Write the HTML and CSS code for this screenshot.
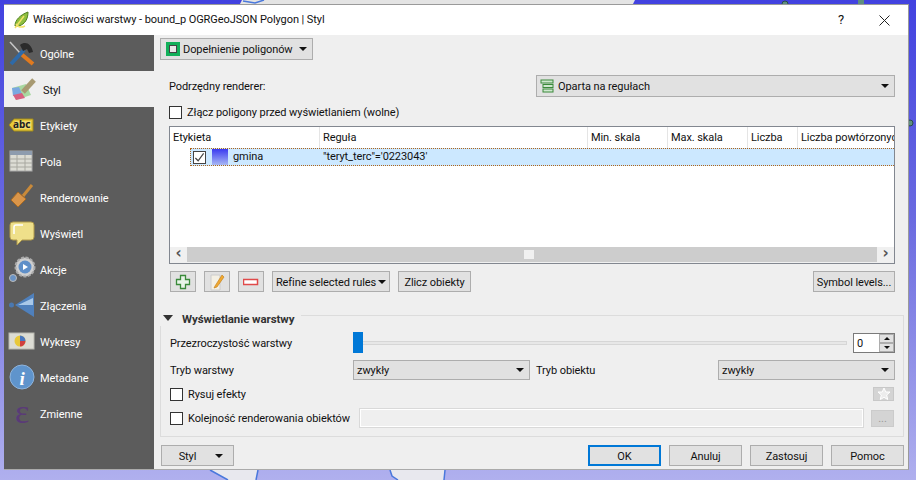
FILE: index.html
```html
<!DOCTYPE html>
<html lang="pl">
<head>
<meta charset="utf-8">
<title>Właściwości warstwy</title>
<link rel="stylesheet" href="styles.css">
</head>
<body>
<svg class="map" width="916" height="480" viewBox="0 0 916 480">
  <path d="M242 0h393l-2 4H240z" fill="#e4e4e4"/>
  <path d="M243 1l12 2 9-3" fill="none" stroke="#4a78dc" stroke-width="1.500"/>
  <circle cx="785" cy="4" r="3" fill="#5f8f7f" stroke="#2a4a4a"/>
  <rect x="858" y="0" width="6" height="5" fill="#5f8f7f"/>
  <circle cx="910" cy="123" r="3" fill="#5f8f7f" stroke="#2a4a4a"/>
  <path d="M210 470l18 10h28l2-10zM390 470l2 6 6 4h46l1-10z" fill="#e8e8ee"/>
  <path d="M210 470l18 10M258 470l-2 10M390 470l2 6 6 4M445 470l-1 10" fill="none" stroke="#4a78dc" stroke-width="1.500"/>
</svg>
<div class="window">
  <header class="titlebar">
    <svg class="app-icon" width="16" height="18" viewBox="0 0 16 18"><path d="M2 15C2 9 7 4 15 1c0 7-3 12-9 14z" fill="#8fbf3f" stroke="#4f7f1f"/><path d="M3 13c2 3 5 4 9 2M2 17 11 5" stroke="#f3e26a" stroke-width="1.500" fill="none"/></svg>
    <span class="title-text">Właściwości warstwy - bound_p OGRGeoJSON Polygon | Styl</span>
    <span class="title-help">?</span>
    <svg class="title-close" width="11" height="11" viewBox="0 0 11 11"><path d="M.5.5l10 10M10.500.5l-10 10" stroke="#222" fill="none"/></svg>
  </header>
  <div class="body">
    <nav class="sidebar">
      <div class="nav-item"><svg class="nav-icon" viewBox="0 0 26 26"><path d="M1 2l10 11" stroke="#c8c8c8" stroke-width="1.500"/><path d="M11 13l13 11" stroke="#e07a1f" stroke-width="4"/><path d="M2 24 15 10" stroke="#2f6aa8" stroke-width="4"/><path d="M11 5c5-4 11-2 13 7l-4 1-2-4-4 2z" fill="#2b2b2b"/></svg><span>Ogólne</span></div>
      <div class="nav-item active"><svg class="nav-icon" viewBox="0 0 26 26"><path d="M3 12l14-4 5 11-15 5z" fill="#a8d8a0"/><path d="M3 12l7-1 3 7-9 2z" fill="#7aa8e0"/><path d="M4 19l9-2 3 5-9 2z" fill="#d86080"/><path d="M14 16 25 4" stroke="#a89a72" stroke-width="5"/></svg><span class="nav-label-wide">Styl</span></div>
      <div class="nav-item"><svg class="nav-icon" viewBox="0 0 26 26"><path d="M0 13l5-6h19v12H5z" fill="#e8c93a" stroke="#a08a1a"/><rect x="6" y="9" width="16" height="8" fill="#f0dc70"/></svg><span class="nav-abc">abc</span><span>Etykiety</span></div>
      <div class="nav-item"><svg class="nav-icon" viewBox="0 0 26 26"><rect x="1" y="3" width="22" height="20" fill="#dcdcd4" stroke="#aaa"/><rect x="1" y="3" width="22" height="4" fill="#8e9cae"/><path d="M1 11h22M1 15h22M1 19h22M8 7v16M16 7v16" stroke="#a8a8a0"/></svg><span>Pola</span></div>
      <div class="nav-item"><svg class="nav-icon" viewBox="0 0 26 26"><path d="M14 12 23 1" stroke="#c98a3a" stroke-width="3"/><path d="M9 8l8 7-8 8-7-7z" fill="#d9954a" stroke="#a86a22"/></svg><span>Renderowanie</span></div>
      <div class="nav-item"><svg class="nav-icon" viewBox="0 0 26 26"><path d="M4 2h18a3 3 0 0 1 3 3v12a3 3 0 0 1-3 3H13l-5 5v-5H4a3 3 0 0 1-3-3V5a3 3 0 0 1 3-3z" fill="#efe08a" stroke="#b09a4a"/><path d="M5 14V7a2 2 0 0 1 2-2h7" stroke="#fff" stroke-width="1.500" fill="none"/></svg><span>Wyświetl</span></div>
      <div class="nav-item"><svg class="nav-icon" viewBox="0 0 26 26"><circle cx="16" cy="11" r="9.500" fill="#cfcfcf" stroke="#aaa" stroke-width="2" stroke-dasharray="3 1.500"/><circle cx="16" cy="11" r="6.500" fill="#5f8fc8"/><path d="M14 8l5 3-5 3z" fill="#fff"/><circle cx="4" cy="22" r="3.500" fill="#6a93c4" stroke="#bbb"/></svg><span>Akcje</span></div>
      <div class="nav-item"><svg class="nav-icon" viewBox="0 0 26 26"><path d="M6 13 25 1v24z" fill="#4f80bc"/><path d="M9 13l15-7v7z" fill="#a9c8e8"/><circle cx="2.500" cy="13" r="2.500" fill="#4a78b0"/></svg><span>Złączenia</span></div>
      <div class="nav-item"><svg class="nav-icon" viewBox="0 0 26 26"><rect x="0" y="5" width="25" height="16" fill="#dcdcd4" stroke="#b8b8b0"/><circle cx="11" cy="13" r="5.500" fill="#e8c83a"/><path d="M11 13V7.500A5.500 5.500 0 0 1 16.500 13z" fill="#4a78c0"/><path d="M11 13h5.500A5.500 5.500 0 0 1 11 18.500z" fill="#d04040"/></svg><span>Wykresy</span></div>
      <div class="nav-item"><svg class="nav-icon" viewBox="0 0 26 26"><circle cx="13" cy="13" r="12" fill="#5f94cc" stroke="#8fb4dc"/><text x="13" y="21" text-anchor="middle" class="info-glyph">i</text></svg><span>Metadane</span></div>
      <div class="nav-item"><svg class="nav-icon" viewBox="0 0 26 26"><text x="13" y="23" text-anchor="middle" class="eps-glyph">ε</text></svg><span>Zmienne</span></div>
    </nav>
    <main class="content">
      <div class="top-row">
        <button class="btn symbol-btn"><span class="green-swatch"></span>Dopełnienie poligonów<i class="caret caret-m"></i></button>
      </div>
      <div class="renderer-row">
        <label>Podrzędny renderer:</label>
        <div class="btn combo renderer-combo">
          <svg width="14" height="14" viewBox="0 0 14 14"><rect x="1" y="1" width="12" height="3" fill="#cfe8cf" stroke="#3a8a3a"/><rect x="3" y="5.500" width="10" height="3" fill="#cfe8cf" stroke="#3a8a3a"/><rect x="3" y="10" width="10" height="3" fill="#cfe8cf" stroke="#3a8a3a"/></svg>
          <span class="combo-text">Oparta na regułach</span><i class="caret"></i>
        </div>
      </div>
      <label class="check-row merge-row"><span class="checkbox"></span>Złącz poligony przed wyświetlaniem (wolne)</label>
      <div class="tree">
        <div class="tree-head">
          <span class="col c1">Etykieta</span><span class="col c2">Reguła</span><span class="col c3">Min. skala</span><span class="col c4">Max. skala</span><span class="col c5">Liczba</span><span class="col c6">Liczba powtórzonyc</span>
        </div>
        <div class="tree-row">
          <span class="tree-check"><svg width="12" height="12" viewBox="0 0 12 12"><path d="M1.500 6l3 3 6-8" fill="none" stroke="#444" stroke-width="1.300"/></svg></span>
          <span class="tree-swatch"></span>
          <span class="tree-name">gmina</span>
          <span class="tree-rule">"teryt_terc"='0223043'</span>
        </div>
        <div class="tree-fill"></div>
        <div class="hscroll">
          <span class="arrow">‹</span>
          <div class="track"><span class="thumb-mark"></span></div>
          <span class="arrow">›</span>
        </div>
      </div>
      <div class="tool-row">
        <button class="btn icon-btn"><svg width="16" height="16" viewBox="0 0 16 16"><path d="M5.500 1.500h5v4h4v5h-4v4h-5v-4h-4v-5h4z" fill="#e8f4e8" stroke="#3a8a3a" stroke-width="1.300"/></svg></button>
        <button class="btn icon-btn"><svg width="18" height="20" viewBox="0 0 18 20"><path d="M3 3h9v15H3z" fill="#f4f0e4" stroke="#ccc"/><path d="M7 14l7-11 2 2-7 10-3 1z" fill="#f0a830" stroke="#c07a10" stroke-width=".6"/></svg></button>
        <button class="btn icon-btn"><svg width="16" height="8" viewBox="0 0 16 8"><rect x=".5" y="1.500" width="14" height="5" fill="#fff" stroke="#e04a4a" stroke-width="1.500"/></svg></button>
        <button class="btn refine-btn">Refine selected rules<i class="caret"></i></button>
        <button class="btn count-btn">Zlicz obiekty</button>
        <button class="btn levels-btn">Symbol levels...</button>
      </div>
      <section class="group">
        <div class="group-title"><i class="caret caret-big"></i><strong>Wyświetlanie warstwy</strong><span class="group-rule"></span></div>
        <div class="group-box">
          <div class="row opacity-row">
            <span class="row-label">Przezroczystość warstwy</span>
            <div class="slider"><span class="slider-handle"></span><span class="slider-groove"></span></div>
            <div class="spin"><span class="spin-value">0</span><span class="spin-btns"><span class="spin-b"><i class="up"></i></span><span class="spin-b"><i class="caret caret-s"></i></span></span></div>
          </div>
          <div class="row blend-row">
            <span class="row-label">Tryb warstwy</span>
            <div class="btn combo blend-a"><span class="combo-text">zwykły</span><i class="caret"></i></div>
            <span class="blend-label">Tryb obiektu</span>
            <div class="btn combo blend-b"><span class="combo-text">zwykły</span><i class="caret"></i></div>
          </div>
          <div class="row effects-row">
            <label class="check-row"><span class="checkbox"></span>Rysuj efekty</label>
            <span class="star-btn"><svg width="14" height="14" viewBox="0 0 14 14"><path d="M7 1l1.800 4H13l-3.300 3 1 4.500L7 10.300 3.300 12.500l1-4.500L1 5h4.200z" fill="#ececec" stroke="#fff"/></svg></span>
          </div>
          <div class="row order-row">
            <label class="check-row"><span class="checkbox"></span>Kolejność renderowania obiektów</label>
            <div class="order-input"></div>
            <span class="dots-btn">...</span>
          </div>
        </div>
      </section>
      <footer class="footer">
        <button class="btn style-btn">Styl<i class="caret"></i></button>
        <span class="spacer"></span>
        <button class="btn foot-btn ok">OK</button>
        <button class="btn foot-btn">Anuluj</button>
        <button class="btn foot-btn">Zastosuj</button>
        <button class="btn foot-btn">Pomoc</button>
      </footer>
    </main>
  </div>
</div>
</body>
</html>
```
FILE: styles.css
```css
* { box-sizing: border-box; }
html, body { margin: 0; height: 100%; }
body {
  position: relative;
  width: 916px; height: 480px; overflow: hidden;
  padding: 4px 7px 0 4px;
  background: linear-gradient(#4242e0 0, #6a6ae0 45%, #b0b0ee 100%);
  font: 11px/16px "Roboto", "Noto Sans", sans-serif;
  letter-spacing: -.08px;
  color: #111;
  white-space: nowrap;
}
.map { position: absolute; left: 0; top: 0; }
.window {
  position: relative;
  width: 905px; height: 466px;
  display: flex; flex-direction: column;
  background: #efefef;
  border: 1px solid #9a9a9a; border-left: 0; border-bottom-color: #aaa;
}
.titlebar { height: 30px; flex: none; display: flex; align-items: center; background: #fff; padding: 0 18px 0 9px; }
.app-icon { margin-right: 4px; }
.title-text { flex: 1; }
.title-help { margin-right: 35px; font-size: 13px; }
.body { flex: 1; display: flex; min-height: 0; }
.sidebar { width: 150px; flex: none; background: #5c5c5c; color: #fff; }
.nav-item { height: 36px; display: flex; align-items: center; padding-left: 5px; position: relative; }
.nav-item span { margin-left: 5px; padding-top: 4px; }
.nav-item.active { background: #efefef; color: #111; }
.nav-item .nav-label-wide { margin-left: 8px; }
.nav-icon { width: 26px; height: 26px; flex: none; overflow: visible; }
.nav-item .nav-abc { position: absolute; left: 9px; top: 10px; margin: 0; padding: 0; font: bold 10px/14px "Noto Sans", sans-serif; color: #222; }
.info-glyph { font: italic bold 19px "Liberation Serif", serif; fill: #fff; }
.eps-glyph { font: 34px/26px "Liberation Serif", serif; fill: #5a3a78; }
.content { flex: 1; min-width: 0; display: flex; flex-direction: column; padding: 3px 4px 0 6px; }
.btn {
  background: #e1e1e1; border: 1px solid #adadad; color: #111;
  font: inherit; letter-spacing: inherit; padding: 2px 0 0; display: flex; align-items: center; justify-content: center;
}
.btn svg, .btn .caret, .btn .green-swatch { margin-bottom: 2px; }
.caret { display: inline-block; width: 0; height: 0; border: 4px solid transparent; border-top: 4px solid #111; border-bottom: 0; flex: none; }
.top-row { display: flex; }
.symbol-btn { width: 153px; height: 22px; justify-content: flex-start; padding-left: 5px; }
.green-swatch { width: 14px; height: 14px; flex: none; background: #e8e8e8; border: 3px solid #12b05a; margin-right: 3px; box-shadow: inset 0 0 0 1px #444; }
.caret-m { margin-left: auto; margin-right: 5px; }
.renderer-row { display: flex; align-items: center; margin-top: 15px; height: 22px; padding-left: 9px; }
.renderer-row label { width: 367px; padding-top: 2px; }
.combo { justify-content: flex-start; padding: 2px 5px 0 3px; }
.combo-text { flex: 1; }
.renderer-combo { width: 359px; height: 22px; }
.renderer-combo .combo-text { margin-left: 4px; }
.check-row { display: flex; align-items: center; padding-top: 2px; }
.merge-row { margin: 4px 0 0 9px; height: 22px; }
.checkbox { width: 13px; height: 13px; background: #fff; border: 1px solid #333; margin: 0 5px 2px 0; flex: none; }
.tree { margin: 3px 0 0 9px; width: 726px; height: 138px; background: #fff; border: 1px solid #828790; display: flex; flex-direction: column; overflow: hidden; }
.tree-head { height: 21px; display: flex; flex: none; }
.col { padding: 1px 0 0 3px; border-right: 1px solid #e5e5e5; line-height: 20px; overflow: hidden; }
.c1 { width: 150px; } .c2 { width: 268px; } .c3 { width: 80px; } .c4 { width: 80px; } .c5 { width: 50px; } .c6 { flex: 1; border: 0; }
.tree-row { margin-left: 20px; height: 18px; flex: none; display: flex; align-items: center; background: #cce8ff; border: 1px dotted #b0651a; border-right: 0; }
.tree-check { width: 13px; height: 13px; margin: 1px 0 0 2px; background: #fff; border: 1px solid #444; display: flex; align-items: center; justify-content: center; }
.tree-swatch { width: 16px; height: 16px; margin-left: 6px; background: linear-gradient(#3a3af0, #a8b8f4); }
.tree-name { margin-left: 5px; width: 90px; }
.tree-fill { flex: 1; }
.hscroll { height: 16px; flex: none; display: flex; align-items: flex-start; background: #f0f0f0; }
.arrow { width: 17px; text-align: center; font: bold 15px/13px "DejaVu Sans", sans-serif; color: #555; }
.track { flex: 1; height: 15px; background: #cdcdcd; display: flex; align-items: center; justify-content: center; }
.thumb-mark { width: 10px; height: 9px; background: #f0f0f0; margin-right: 6px; }
.tool-row { display: flex; align-items: flex-start; margin: 7px 9px 0 10px; height: 21px; }
.icon-btn { width: 26px; height: 21px; margin-right: 8px; }
.refine-btn { width: 118px; height: 21px; margin-right: 8px; }
.refine-btn .caret { margin-left: 2px; }
.count-btn { width: 73px; height: 21px; }
.levels-btn { width: 82px; height: 21px; margin-left: auto; }
.group { margin-top: 18px; }
.group-title { display: flex; align-items: center; height: 16px; }
.group-title strong { margin: 0 7px 0 9px; padding-top: 2px; font-weight: 700; font-size: 11.500px; color: #333; }
.caret-big { border-width: 6px 5px 0; margin-left: 3px; border-top-color: #333; }
.group-rule { flex: 1; align-self: flex-start; margin-top: 5px; height: 11px; border-top: 1px solid #dcdcdc; border-right: 1px solid #dcdcdc; }
.group-box { border: 1px solid #dcdcdc; border-top: 0; height: 111px; padding: 6px 8px 0 9px; }
.row { display: flex; align-items: center; }
.opacity-row { height: 21px; }
.row-label { width: 183px; flex: none; padding-top: 2px; }
.slider { position: relative; flex: 1; height: 21px; display: flex; align-items: center; }
.slider-handle { position: absolute; left: 0; top: 0; width: 10px; height: 21px; background: #0078d7; }
.slider-groove { width: 100%; height: 4px; margin-right: 6px; background: #e7e7e7; border: 1px solid #d6d6d6; }
.spin { width: 42px; height: 20px; margin-top: 1px; background: #fff; border: 1px solid #7a7a7a; display: flex; flex: none; }
.spin-value { flex: 1; padding: 1px 0 0 3px; line-height: 17px; }
.spin-btns { width: 15px; display: flex; flex-direction: column; }
.spin-b { flex: 1; background: #e1e1e1; border: 1px solid #adadad; display: flex; align-items: center; justify-content: center; }
.spin-b .caret { margin: 0; }
.caret-s { border-width: 3px 3px 0; }
.up { width: 0; height: 0; border: 3px solid transparent; border-bottom: 3px solid #111; border-top: 0; }
.blend-row { height: 20px; margin-top: 7px; }
.blend-a { width: 177px; height: 20px; }
.blend-label { width: 188px; padding: 2px 0 0 6px; flex: none; }
.blend-b { flex: 1; height: 20px; }
.effects-row { height: 14px; margin-top: 7px; justify-content: space-between; padding-right: 1px; }
.star-btn { width: 21px; height: 14px; background: #d4d4d4; border: 1px solid #c8c8c8; display: flex; align-items: center; justify-content: center; }
.order-row { height: 20px; margin-top: 7px; }
.order-row .check-row { width: 189px; flex: none; }
.order-input { width: 505px; height: 20px; background: #efefef; border: 1px solid #d9d9d9; box-shadow: inset 0 0 0 1px #fff; }
.dots-btn { width: 23px; height: 17px; margin-left: 7px; background: #d4d4d4; border: 1px solid #cbcbcb; text-align: center; line-height: 16px; color: #999; }
.footer { display: flex; align-items: center; margin-top: 8px; height: 21px; }
.style-btn { width: 73px; height: 21px; margin-left: 1px; gap: 19px; padding-left: 7px; }
.spacer { flex: 1; }
.foot-btn { width: 73px; height: 21px; margin-left: 8px; }
.ok { border: 2px solid #0078d7; margin-left: 0; }
```
